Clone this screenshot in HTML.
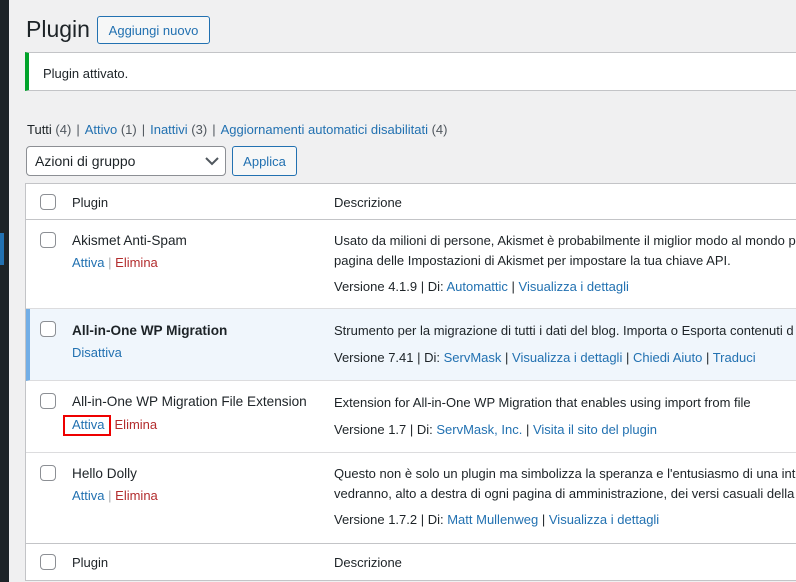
<!DOCTYPE html>
<html><head><meta charset="utf-8"><style>
*{box-sizing:border-box;margin:0;padding:0}
body{width:796px;height:582px;overflow:hidden;background:#f0f0f1;font-family:"Liberation Sans",sans-serif;font-size:13px;color:#1d2327;position:relative}
.side{position:absolute;left:0;top:0;width:9px;height:582px;background:#1d2327}
.side i{position:absolute;left:0;top:233px;width:4px;height:32px;background:#2271b1}
.abs{position:absolute}
a{color:#2271b1;text-decoration:none}
.del{color:#b32d2e}
h1{position:absolute;left:26px;top:16px;font-size:23px;font-weight:400;color:#1d2327}
.btn{position:absolute;border:1px solid #2271b1;border-radius:3px;color:#2271b1;background:#f6f7f7;font-size:13px;text-align:center}
.notice{position:absolute;left:25px;top:52px;width:780px;height:39px;background:#fff;border:1px solid #c3c4c7;border-left:4px solid #00a32a;padding:13px 0 0 14px}
.sub{position:absolute;left:27px;top:122px;color:#50575e;white-space:nowrap}
.sub a{color:#2271b1}
.sub s{text-decoration:none;margin:0 5px}
.sel{position:absolute;left:26px;top:146px;width:200px;height:30px;border:1px solid #8c8f94;border-radius:4px;background:#fff;padding:6px 0 0 8px;font-size:14px}
.tbl{position:absolute;left:25px;top:183px;width:790px;height:398px;background:#fff;border:1px solid #c3c4c7}
.row{position:absolute;left:0;width:100%;border-bottom:1px solid #dcdcde}
.cb{position:absolute;left:14px;width:16px;height:16px;border:1px solid #8c8f94;border-radius:4px;background:#fff}
.t{position:absolute;white-space:nowrap}
.n{font-size:13.6px}
.sep{color:#a7aaad}
</style></head><body>
<div class="side"><i></i></div>
<h1>Plugin</h1>
<div class="btn" style="left:97px;top:16px;width:113px;height:28px;padding-top:6px">Aggiungi nuovo</div>
<div class="notice">Plugin attivato.</div>
<div class="sub"><b style="color:#1d2327;font-weight:400">Tutti</b> (4)<s>|</s><a>Attivo</a> (1)<s>|</s><a>Inattivi</a> (3)<s>|</s><a>Aggiornamenti automatici disabilitati</a> (4)</div>
<div class="sel">Azioni di gruppo<svg class="abs" style="left:178px;top:10px" width="14" height="9" viewBox="0 0 14 9"><path d="M1 1l6 6 6-6" fill="none" stroke="#50575e" stroke-width="2"/></svg></div>
<div class="btn" style="left:232px;top:146px;width:65px;height:30px;padding-top:7px">Applica</div>
<div class="tbl">
 <div class="row" style="top:0;height:36px;border-bottom-color:#c3c4c7"><div class="cb" style="top:10px"></div><div class="t" style="left:46px;top:11px">Plugin</div><div class="t" style="left:308px;top:11px">Descrizione</div></div>
 <div class="row" style="top:36px;height:89px"><div class="cb" style="top:12px"></div>
  <div class="t n" style="left:46px;top:13px">Akismet Anti-Spam</div>
  <div class="t" style="left:46px;top:35px"><a>Attiva</a> <span class="sep">|</span> <span class="del">Elimina</span></div>
  <div class="t" style="left:308px;top:13px">Usato da milioni di persone, Akismet è probabilmente il miglior modo al mondo p</div>
  <div class="t" style="left:308px;top:33px">pagina delle Impostazioni di Akismet per impostare la tua chiave API.</div>
  <div class="t" style="left:308px;top:59px">Versione 4.1.9 | Di: <a>Automattic</a> | <a>Visualizza i dettagli</a></div></div>
 <div class="row" style="top:125px;height:72px;background:#f0f6fc;border-left:4px solid #72aee6;left:0"><div class="cb" style="top:12px;left:10px"></div>
  <div class="t n" style="left:42px;top:14px;font-weight:700">All-in-One WP Migration</div>
  <div class="t" style="left:42px;top:36px"><a>Disattiva</a></div>
  <div class="t" style="left:304px;top:14px">Strumento per la migrazione di tutti i dati del blog. Importa o Esporta contenuti d</div>
  <div class="t" style="left:304px;top:41px">Versione 7.41 | Di: <a>ServMask</a> | <a>Visualizza i dettagli</a> | <a>Chiedi Aiuto</a> | <a>Traduci</a></div></div>
 <div class="row" style="top:197px;height:72px"><div class="cb" style="top:12px"></div>
  <div class="t n" style="left:46px;top:13px">All-in-One WP Migration File Extension</div>
  <div class="t" style="left:37px;top:34px;width:48px;height:21px;border:2px solid #e00"></div>
  <div class="t" style="left:46px;top:36px"><a>Attiva</a><span class="del" style="margin-left:10px">Elimina</span></div>
  <div class="t" style="left:308px;top:14px">Extension for All-in-One WP Migration that enables using import from file</div>
  <div class="t" style="left:308px;top:41px">Versione 1.7 | Di: <a>ServMask, Inc.</a> | <a>Visita il sito del plugin</a></div></div>
 <div class="row" style="top:269px;height:91px;border-bottom-color:#c3c4c7"><div class="cb" style="top:12px"></div>
  <div class="t n" style="left:46px;top:13px">Hello Dolly</div>
  <div class="t" style="left:46px;top:35px"><a>Attiva</a> <span class="sep">|</span> <span class="del">Elimina</span></div>
  <div class="t" style="left:308px;top:13px">Questo non è solo un plugin ma simbolizza la speranza e l'entusiasmo di una inte</div>
  <div class="t" style="left:308px;top:33px">vedranno, alto a destra di ogni pagina di amministrazione, dei versi casuali della c</div>
  <div class="t" style="left:308px;top:59px">Versione 1.7.2 | Di: <a>Matt Mullenweg</a> | <a>Visualizza i dettagli</a></div></div>
 <div class="row" style="top:360px;height:37px;border:none"><div class="cb" style="top:10px"></div><div class="t" style="left:46px;top:11px">Plugin</div><div class="t" style="left:308px;top:11px">Descrizione</div></div>
</div>
</body></html>
